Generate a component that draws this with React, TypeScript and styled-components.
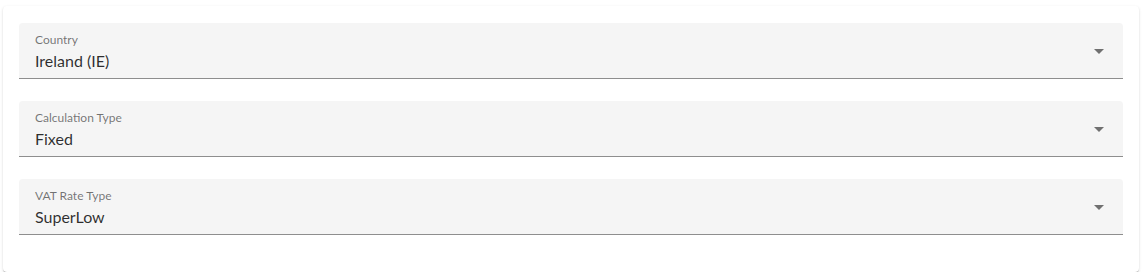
import React from "react";
import styled, { createGlobalStyle } from "styled-components";

const GlobalStyle = createGlobalStyle`
    body {
        margin: 0;
        background: #ffffff;
        font-family: Lato, "Segoe UI", "Noto Sans", sans-serif;
    }
`;

const Card = styled.div`
    margin: 6px 6px 0 3px;
    height: 266px;
    box-sizing: border-box;
    padding: 17px 16px 0 16px;
    background: #fff;
    border-radius: 4px;
    box-shadow: 0px 2px 1px -1px rgba(0, 0, 0, 0.2),
        0px 1px 1px 0px rgba(0, 0, 0, 0.14), 0px 1px 3px 0px rgba(0, 0, 0, 0.12);
    display: flex;
    flex-direction: column;
    gap: 22px;
`;

const Field = styled.div`
    position: relative;
    height: 56px;
    box-sizing: border-box;
    background: #f5f5f5;
    border-top-left-radius: 4px;
    border-top-right-radius: 4px;
    border-bottom: 1px solid rgba(0, 0, 0, 0.42);
    padding: 10px 40px 0 16px;
    display: flex;
    flex-direction: column;
    cursor: pointer;
`;

const Label = styled.span`
    font-size: 12px;
    line-height: 14px;
    color: rgba(0, 0, 0, 0.54);
`;

const Value = styled.span`
    margin-top: 4px;
    font-size: 16px;
    line-height: 19px;
    color: rgba(0, 0, 0, 0.82);
`;

const Arrow = styled.svg`
    position: absolute;
    right: 12px;
    top: 16px;
    width: 24px;
    height: 24px;
    fill: rgba(0, 0, 0, 0.54);
`;

const fields = [
    { label: "Country", value: "Ireland (IE)" },
    { label: "Calculation Type", value: "Fixed" },
    { label: "VAT Rate Type", value: "SuperLow" },
];

const SelectField: React.FC<{ label: string; value: string }> = ({ label, value }) => (
    <Field>
        <Label>{label}</Label>
        <Value>{value}</Value>
        <Arrow viewBox="0 0 24 24">
            <path d="M7 10l5 5 5-5z" />
        </Arrow>
    </Field>
);

const App: React.FC = () => (
    <>
        <GlobalStyle />
        <Card>
            {fields.map((f) => (
                <SelectField key={f.label} label={f.label} value={f.value} />
            ))}
        </Card>
    </>
);

export default App;
